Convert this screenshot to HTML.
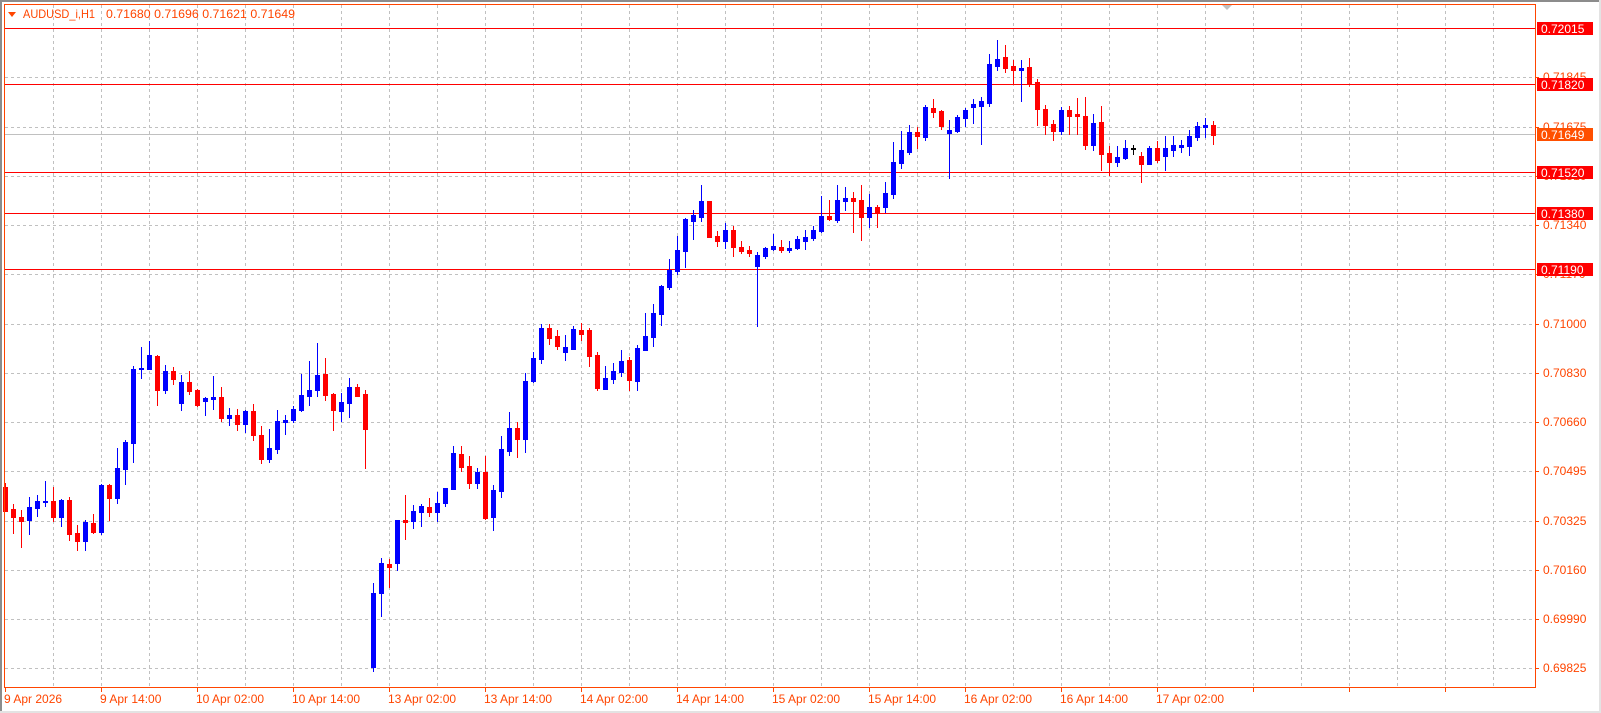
<!DOCTYPE html>
<html><head><meta charset="utf-8"><style>
html,body{margin:0;padding:0;background:#fff;}
body{width:1601px;height:713px;overflow:hidden;position:relative;}
svg{position:absolute;left:0;top:0;}
text{font-family:"Liberation Sans",sans-serif;font-size:12px;}
</style></head><body>
<svg id="s" width="1601" height="713" xmlns="http://www.w3.org/2000/svg">
<rect x="0" y="0" width="1601" height="713" fill="#fff"/>
<rect x="0" y="0" width="1601" height="2" fill="#8c8c8c"/>
<rect x="0" y="0" width="2" height="713" fill="#8c8c8c"/>
<rect x="0" y="711" width="1601" height="2" fill="#e3e3e3"/>
<rect x="1599" y="0" width="2" height="713" fill="#e3e3e3"/>
<g id="grid" stroke="#c0c0c0" stroke-width="1" stroke-dasharray="3,3"></g>
<polygon points="1222,5 1232,5 1227,10" fill="#c0c0c0"/>
<line x1="5" y1="134.5" x2="1535" y2="134.5" stroke="#c0c0c0"/>
<g stroke="#ff0000" stroke-width="1">
<line x1="5" y1="28.5" x2="1535" y2="28.5"/>
<line x1="5" y1="84.5" x2="1535" y2="84.5"/>
<line x1="5" y1="172.5" x2="1535" y2="172.5"/>
<line x1="5" y1="213.5" x2="1535" y2="213.5"/>
<line x1="5" y1="269.5" x2="1535" y2="269.5"/>
</g>
<g id="candles"></g>
<rect x="4.5" y="4.5" width="1531" height="683" fill="none" stroke="#ff4500" stroke-width="1"/>
<g id="ticks" stroke="#ff4500"></g>
<polygon points="8,12 16,12 12,17" fill="#ff4500"/>
<text x="23" y="18" fill="#ff4500" textLength="72" lengthAdjust="spacingAndGlyphs">AUDUSD_i,H1</text>
<text x="106" y="18" fill="#ff4500" textLength="189" lengthAdjust="spacingAndGlyphs">0.71680 0.71696 0.71621 0.71649</text>
<g fill="#ff4500">
<text x="1543" y="81">0.71845</text>
<text x="1543" y="131">0.71675</text>
<text x="1543" y="180">0.71510</text>
<text x="1543" y="229">0.71340</text>
<text x="1543" y="278">0.71170</text>
<text x="1543" y="328">0.71000</text>
<text x="1543" y="377">0.70830</text>
<text x="1543" y="426">0.70660</text>
<text x="1543" y="475">0.70495</text>
<text x="1543" y="525">0.70325</text>
<text x="1543" y="574">0.70160</text>
<text x="1543" y="623">0.69990</text>
<text x="1543" y="672">0.69825</text>
</g>
<g>
<rect x="1537" y="22" width="56" height="13" fill="#ff0000"/><text x="1541" y="33" fill="#fff">0.72015</text>
<rect x="1537" y="78" width="56" height="13" fill="#ff0000"/><text x="1541" y="89" fill="#fff">0.71820</text>
<rect x="1537" y="128" width="56" height="13" fill="#ff4f00"/><text x="1541" y="139" fill="#fff">0.71649</text>
<rect x="1537" y="166" width="56" height="13" fill="#ff0000"/><text x="1541" y="177" fill="#fff">0.71520</text>
<rect x="1537" y="207" width="56" height="13" fill="#ff0000"/><text x="1541" y="218" fill="#fff">0.71380</text>
<rect x="1537" y="263" width="56" height="13" fill="#ff0000"/><text x="1541" y="274" fill="#fff">0.71190</text>
</g>
<g fill="#ff4500">
<text x="4" y="703">9 Apr 2026</text>
<text x="100" y="703">9 Apr 14:00</text>
<text x="196" y="703">10 Apr 02:00</text>
<text x="292" y="703">10 Apr 14:00</text>
<text x="388" y="703">13 Apr 02:00</text>
<text x="484" y="703">13 Apr 14:00</text>
<text x="580" y="703">14 Apr 02:00</text>
<text x="676" y="703">14 Apr 14:00</text>
<text x="772" y="703">15 Apr 02:00</text>
<text x="868" y="703">15 Apr 14:00</text>
<text x="964" y="703">16 Apr 02:00</text>
<text x="1060" y="703">16 Apr 14:00</text>
<text x="1156" y="703">17 Apr 02:00</text>
</g>
</svg>
<script>
var NS="http://www.w3.org/2000/svg";
function el(n,a,p){var e=document.createElementNS(NS,n);for(var k in a)e.setAttribute(k,a[k]);p.appendChild(e);return e;}
var g=document.getElementById("grid");
for(var x=53;x<1535;x+=48){el("line",{x1:x+.5,y1:5,x2:x+.5,y2:687},g);}
var hy=[77,127,176,225,274,324,373,422,471,521,570,619,668];
hy.forEach(function(y){el("line",{x1:5,y1:y+.5,x2:1535,y2:y+.5},g);});
var t=document.getElementById("ticks");
hy.forEach(function(y){el("line",{x1:1535,y1:y+.5,x2:1539,y2:y+.5},t);});
for(var x=5;x<1535;x+=96){el("line",{x1:x+.5,y1:687,x2:x+.5,y2:692},t);}
var D="5 r 483 487 511 511|13 r 504 509 517 533|21 r 510 517 521 547|29 b 497 507 520 534|37 b 495 501 508 516|45 b 481 501 502 506|53 r 487 501 517 521|61 b 499 500 517 526|69 r 497 500 534 540|77 r 525 533 541 550|85 b 520 522 541 550|93 r 514 523 532 533|101 b 484 485 532 534|109 r 484 485 498 520|117 b 448 468 498 503|125 b 440 442 469 484|133 b 366 369 443 462|141 b 347 368 369 378|149 b 341 355 369 369|157 r 355 356 390 405|165 b 365 371 390 393|173 r 367 371 379 384|181 b 375 382 403 410|189 r 371 382 391 394|197 r 389 390 405 406|205 b 397 398 401 415|213 b 376 397 399 409|221 r 387 397 418 421|229 b 408 415 418 425|237 r 409 415 424 430|245 b 410 411 424 432|253 r 404 411 435 440|261 r 426 435 459 463|269 b 429 448 459 462|277 b 410 421 449 453|285 b 415 420 422 434|293 b 406 409 420 422|301 b 374 395 410 411|309 b 361 390 396 405|317 b 343 375 390 396|325 r 358 374 395 400|333 r 393 394 410 430|341 b 393 402 411 421|349 b 378 387 403 417|357 r 384 387 396 396|365 r 390 394 429 468|373 b 583 593 667 671|381 b 558 563 593 616|389 r 559 564 567 587|397 b 520 520 563 570|405 r 495 520 522 539|413 b 505 511 521 528|421 b 504 506 512 526|429 r 498 507 512 516|437 b 492 503 512 521|445 b 488 488 503 506|453 b 446 453 489 489|461 r 446 454 467 471|469 r 456 466 483 488|477 b 468 472 483 488|485 r 456 472 518 519|493 b 485 490 517 530|501 b 436 449 491 497|509 b 412 428 451 455|517 r 422 428 439 457|525 b 373 381 439 452|533 b 352 358 381 382|541 b 324 328 359 363|549 r 324 328 338 344|557 r 330 336 346 349|565 b 335 347 352 360|573 b 326 329 349 349|581 r 323 330 334 340|589 r 328 330 356 366|597 r 352 355 388 390|605 b 366 378 389 389|613 b 363 371 379 383|621 b 350 361 372 376|629 r 357 360 380 390|637 b 345 348 381 390|645 b 313 336 350 350|653 b 304 313 337 346|661 b 285 286 314 325|669 b 259 270 287 289|677 b 236 250 271 274|685 b 218 219 251 267|693 b 210 215 221 239|701 b 185 201 217 221|709 r 201 201 237 237|717 r 231 236 241 246|725 b 223 230 241 248|733 r 226 230 247 256|741 r 241 247 251 253|749 r 246 250 253 256|757 b 252 255 266 326|765 b 247 248 256 258|773 b 234 246 249 250|781 r 240 247 250 252|789 b 241 248 250 252|797 b 236 239 248 249|805 b 230 237 241 249|813 b 226 230 238 240|821 b 196 216 231 232|829 r 200 216 219 220|837 b 185 200 220 222|845 b 187 198 201 210|853 r 192 198 201 232|861 r 185 200 217 240|869 b 194 207 217 227|877 r 205 207 213 227|885 b 182 193 207 212|893 b 142 162 194 198|901 b 131 150 163 168|909 b 125 132 152 154|917 r 127 132 136 148|925 b 105 107 137 140|933 r 99 108 112 117|941 r 110 111 126 129|949 b 120 130 133 178|957 b 115 117 131 132|965 b 108 110 118 126|973 b 99 104 107 123|981 b 97 101 106 144|989 b 54 64 103 106|997 b 40 59 66 70|1005 r 45 57 68 72|1013 r 60 66 70 84|1021 b 60 68 70 101|1029 r 58 67 83 86|1037 r 79 82 109 125|1045 r 105 109 125 134|1053 r 120 124 131 140|1061 b 107 110 131 134|1069 r 106 110 116 134|1077 r 98 114 116 134|1085 r 97 116 145 149|1093 b 114 123 145 150|1101 r 106 122 154 170|1109 r 146 153 162 175|1117 b 146 157 162 166|1125 b 140 148 158 159|1133 k 145 148 149 154|1141 r 152 156 164 182|1149 b 146 148 164 164|1157 r 141 148 160 162|1165 b 136 148 156 170|1173 b 136 145 150 156|1181 b 140 145 147 152|1189 b 130 136 146 155|1197 b 122 126 137 140|1205 b 118 125 127 137|1213 r 121 125 135 144";
var C={r:"#ff0000",b:"#0000ff",k:"#000000"};
var P={r:"",b:"",k:""},W={r:"",b:"",k:""};
D.split("|").forEach(function(s){var a=s.split(" ");var x=+a[0],c=a[1],h=+a[2],tp=+a[3],bt=+a[4],l=+a[5];
W[c]+="M"+(x+.5)+" "+h+"V"+(l+1);
var hh=Math.max(bt-tp,1)+1; if(bt-tp<=1)hh=2;
P[c]+="M"+(x-2)+" "+tp+"h5v"+hh+"h-5z";});
var cg=document.getElementById("candles");
for(var c in C){el("path",{d:W[c],stroke:C[c],"stroke-width":1,fill:"none"},cg);el("path",{d:P[c],fill:C[c]},cg);}
</script>
</body></html>
